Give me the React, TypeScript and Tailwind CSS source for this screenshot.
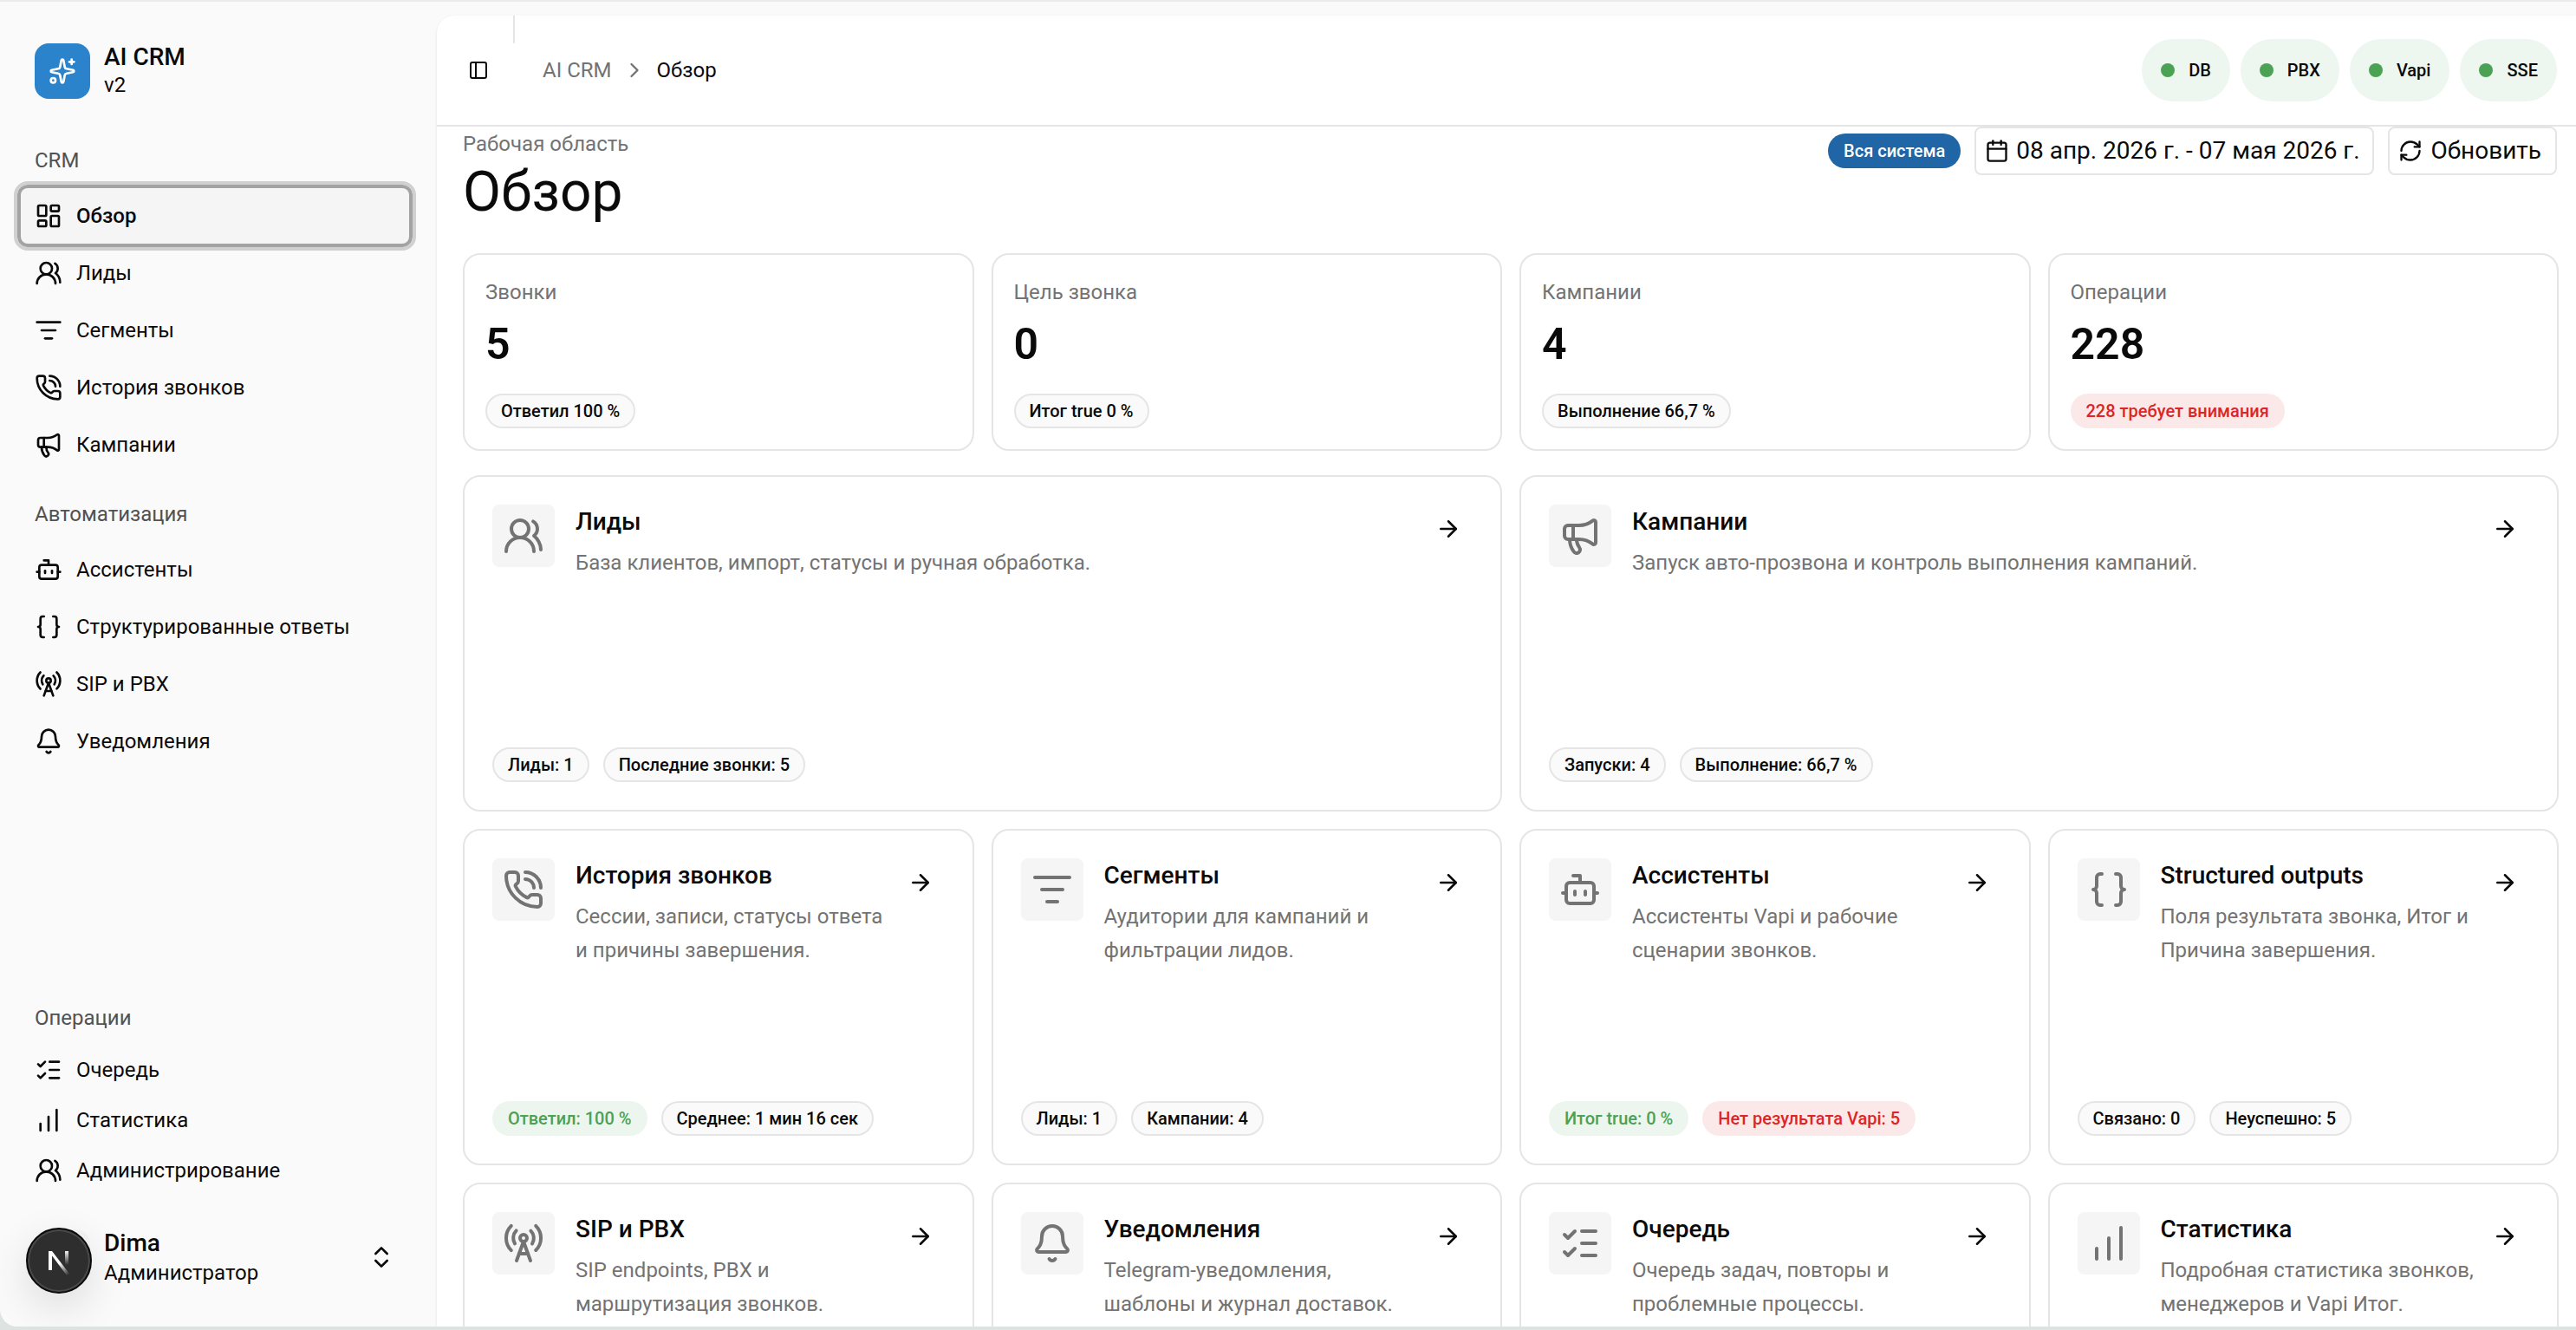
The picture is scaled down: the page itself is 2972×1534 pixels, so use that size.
import {
  ArrowRight,
  Bell,
  Bot,
  Braces,
  Calendar,
  ChartNoAxesColumnIncreasing,
  ChevronRight,
  ChevronsUpDown,
  LayoutDashboard,
  ListChecks,
  ListFilter,
  Megaphone,
  PanelLeft,
  PhoneCall,
  RadioTower,
  RefreshCw,
  Sparkles,
  UsersRound,
  type LucideIcon,
} from "lucide-react";
import clsx from "clsx";

// ---------------------------------------------------------------------------
// Types
// ---------------------------------------------------------------------------

type Tone = "outline" | "success" | "danger";

interface BadgeData {
  text: string;
  tone?: Tone;
}

interface NavItem {
  label: string;
  icon: LucideIcon;
  active?: boolean;
}

interface Section {
  title: string;
  description: string;
  icon: LucideIcon;
  wide?: boolean;
  badges: BadgeData[];
}

// ---------------------------------------------------------------------------
// Data
// ---------------------------------------------------------------------------

const crmNav: NavItem[] = [
  { label: "Обзор", icon: LayoutDashboard, active: true },
  { label: "Лиды", icon: UsersRound },
  { label: "Сегменты", icon: ListFilter },
  { label: "История звонков", icon: PhoneCall },
  { label: "Кампании", icon: Megaphone },
];

const automationNav: NavItem[] = [
  { label: "Ассистенты", icon: Bot },
  { label: "Структурированные ответы", icon: Braces },
  { label: "SIP и PBX", icon: RadioTower },
  { label: "Уведомления", icon: Bell },
];

const operationsNav: NavItem[] = [
  { label: "Очередь", icon: ListChecks },
  { label: "Статистика", icon: ChartNoAxesColumnIncreasing },
  { label: "Администрирование", icon: UsersRound },
];

const services = ["DB", "PBX", "Vapi", "SSE"];

const stats: { label: string; value: string; badge: BadgeData }[] = [
  { label: "Звонки", value: "5", badge: { text: "Ответил 100 %" } },
  { label: "Цель звонка", value: "0", badge: { text: "Итог true 0 %" } },
  { label: "Кампании", value: "4", badge: { text: "Выполнение 66,7 %" } },
  { label: "Операции", value: "228", badge: { text: "228 требует внимания", tone: "danger" } },
];

const sections: Section[] = [
  {
    title: "Лиды",
    description: "База клиентов, импорт, статусы и ручная обработка.",
    icon: UsersRound,
    wide: true,
    badges: [{ text: "Лиды: 1" }, { text: "Последние звонки: 5" }],
  },
  {
    title: "Кампании",
    description: "Запуск авто-прозвона и контроль выполнения кампаний.",
    icon: Megaphone,
    wide: true,
    badges: [{ text: "Запуски: 4" }, { text: "Выполнение: 66,7 %" }],
  },
  {
    title: "История звонков",
    description: "Сессии, записи, статусы ответа и причины завершения.",
    icon: PhoneCall,
    badges: [{ text: "Ответил: 100 %", tone: "success" }, { text: "Среднее: 1 мин 16 сек" }],
  },
  {
    title: "Сегменты",
    description: "Аудитории для кампаний и фильтрации лидов.",
    icon: ListFilter,
    badges: [{ text: "Лиды: 1" }, { text: "Кампании: 4" }],
  },
  {
    title: "Ассистенты",
    description: "Ассистенты Vapi и рабочие сценарии звонков.",
    icon: Bot,
    badges: [
      { text: "Итог true: 0 %", tone: "success" },
      { text: "Нет результата Vapi: 5", tone: "danger" },
    ],
  },
  {
    title: "Structured outputs",
    description: "Поля результата звонка, Итог и Причина завершения.",
    icon: Braces,
    badges: [{ text: "Связано: 0" }, { text: "Неуспешно: 5" }],
  },
  {
    title: "SIP и PBX",
    description: "SIP endpoints, PBX и маршрутизация звонков.",
    icon: RadioTower,
    badges: [],
  },
  {
    title: "Уведомления",
    description: "Telegram-уведомления, шаблоны и журнал доставок.",
    icon: Bell,
    badges: [],
  },
  {
    title: "Очередь",
    description: "Очередь задач, повторы и проблемные процессы.",
    icon: ListChecks,
    badges: [],
  },
  {
    title: "Статистика",
    description: "Подробная статистика звонков, менеджеров и Vapi Итог.",
    icon: ChartNoAxesColumnIncreasing,
    badges: [],
  },
];

// ---------------------------------------------------------------------------
// Small pieces
// ---------------------------------------------------------------------------

function Badge({ text, tone = "outline" }: BadgeData) {
  return (
    <span
      className={clsx(
        "inline-flex h-10 items-center rounded-full border-2 px-4 text-[20px] font-medium whitespace-nowrap",
        tone === "outline" && "border-neutral-200 bg-neutral-50 text-neutral-950",
        tone === "success" && "border-transparent bg-[#edf6ee] text-[#4ba154]",
        tone === "danger" && "border-transparent bg-[#fbe9e9] text-[#dc2626]",
      )}
    >
      {text}
    </span>
  );
}

function NavGroup({ title, items, compact }: { title: string; items: NavItem[]; compact?: boolean }) {
  return (
    <nav aria-label={title} className="pr-8 pl-6">
      <div className="flex h-16 items-center px-4 text-[24px] text-neutral-600">{title}</div>
      <ul className="flex flex-col gap-0.5">
        {items.map(({ label, icon: Icon, active }) => (
          <li key={label}>
            <a
              href="#"
              aria-current={active ? "page" : undefined}
              className={clsx(
                "flex items-center gap-4 rounded-lg px-4 text-[24px] text-neutral-950",
                compact ? "h-14" : "h-16",
                active && "bg-neutral-100 font-medium ring-4 ring-[#a3a3a3] outline-4 outline-offset-4 outline-[#d0d0d0]",
              )}
            >
              <Icon className="size-8 shrink-0" />
              <span className="truncate">{label}</span>
            </a>
          </li>
        ))}
      </ul>
    </nav>
  );
}

function SectionCard({ title, description, icon: Icon, wide, badges }: Section) {
  return (
    <article
      className={clsx(
        "flex flex-col justify-between rounded-[20px] border-2 border-neutral-200 bg-white p-8",
        wide && "col-span-2",
      )}
    >
      <div className="flex items-start">
        <div className="flex size-18 shrink-0 items-center justify-center rounded-lg bg-neutral-100">
          <Icon className="size-12 text-neutral-500" />
        </div>
        <div className="ml-6 min-w-0 flex-1">
          <h2 className="text-[28px] leading-10 font-medium text-neutral-950">{title}</h2>
          <p className="mt-2 text-[24px] leading-[39px] text-neutral-500">{description}</p>
        </div>
        <button
          type="button"
          aria-label={title}
          className="flex size-14 shrink-0 items-center justify-center text-neutral-950"
        >
          <ArrowRight className="size-[30px]" />
        </button>
      </div>
      <div className="flex gap-4">
        {badges.map((badge) => (
          <Badge key={badge.text} {...badge} />
        ))}
      </div>
    </article>
  );
}

// Round dev-tools button floating over the bottom left corner
function DevIndicator() {
  return (
    <button
      type="button"
      aria-label="Dev tools"
      className="absolute bottom-[38px] left-[30px] flex size-19 items-center justify-center rounded-full border-2 border-neutral-950 bg-[#2e2e2e] shadow-[0_16px_48px_rgba(0,0,0,0.12)] ring-2 ring-[#4a4a4a] ring-inset"
    >
      <svg className="size-10" viewBox="0 0 40 40" fill="none" aria-hidden="true">
        <defs>
          <linearGradient id="stem" x1="0" y1="8" x2="0" y2="25" gradientUnits="userSpaceOnUse">
            <stop stopColor="#fff" />
            <stop offset="1" stopColor="#fff" stopOpacity="0" />
          </linearGradient>
          <linearGradient id="diagonal" x1="22" y1="22" x2="32" y2="36" gradientUnits="userSpaceOnUse">
            <stop stopColor="#fff" />
            <stop offset="1" stopColor="#fff" stopOpacity="0" />
          </linearGradient>
        </defs>
        <rect x="8" y="9" width="4" height="22" fill="#fff" />
        <polygon points="8,9 12,9 32,35 29,37" fill="url(#diagonal)" />
        <rect x="27" y="9" width="4" height="17" fill="url(#stem)" />
      </svg>
    </button>
  );
}

// ---------------------------------------------------------------------------
// Layout
// ---------------------------------------------------------------------------

function Sidebar() {
  return (
    <aside className="flex w-[504px] shrink-0 flex-col">
      <div className="flex items-center gap-4 px-10 pt-12">
        <div className="flex size-16 items-center justify-center rounded-2xl bg-[#2b83cc] text-white">
          <Sparkles className="size-8" />
        </div>
        <div>
          <div className="text-[28px] leading-8 font-medium">AI CRM</div>
          <div className="text-[24px] leading-8">v2</div>
        </div>
      </div>

      <div className="mt-[39px] flex flex-1 flex-col gap-4">
        <NavGroup title="CRM" items={crmNav} />
        <NavGroup title="Автоматизация" items={automationNav} />
        <div className="mt-auto">
          <NavGroup title="Операции" items={operationsNav} compact />
        </div>
      </div>

      <button type="button" className="mt-6 mb-8 flex h-24 items-center gap-4 pr-12 pl-10 text-left">
        <span className="size-16 shrink-0 rounded-2xl bg-neutral-100" />
        <span className="flex-1">
          <span className="block text-[28px] leading-9 font-medium">Dima</span>
          <span className="block text-[24px] leading-8">Администратор</span>
        </span>
        <ChevronsUpDown className="size-8" />
      </button>
    </aside>
  );
}

function Header() {
  return (
    <header className="flex h-32 shrink-0 items-center border-b-2 border-neutral-200 pr-[22px]">
      <button type="button" aria-label="Toggle sidebar" className="flex h-14 w-22 items-center justify-center pl-2">
        <PanelLeft className="size-6" />
      </button>
      <div className="h-8 w-0.5 self-start bg-neutral-200" />
      <nav aria-label="Breadcrumb" className="ml-8 flex items-center gap-3 text-[24px]">
        <a href="#" className="text-neutral-500">
          AI CRM
        </a>
        <ChevronRight className="size-7 text-neutral-500" />
        <span aria-current="page">Обзор</span>
      </nav>
      <ul className="ml-auto flex gap-3">
        {services.map((name) => (
          <li
            key={name}
            className="flex h-18 items-center gap-4 rounded-full bg-[#edf6ef] px-[22px] text-[20px] font-medium"
          >
            <span className="size-4 rounded-full bg-[#4ba154]" />
            {name}
          </li>
        ))}
      </ul>
    </header>
  );
}

export default function App() {
  return (
    <div className="h-screen overflow-hidden bg-[#dce3e1] pb-1 font-[Roboto,sans-serif] text-neutral-950">
      <div className="relative flex h-full overflow-hidden rounded-bl-[20px] border-t-2 border-[#ebebeb] bg-neutral-50">
        <Sidebar />

        <main className="mt-4 flex min-w-0 flex-1 flex-col overflow-hidden rounded-tl-[20px] bg-white shadow-sm">
          <Header />

          <div className="min-h-0 flex-1 overflow-hidden pr-5 pl-[30px]">
            {/* Page title */}
            <div className="flex h-[146px] items-start justify-between pr-0.5">
              <div>
                <p className="text-[24px] leading-10 text-neutral-500">Рабочая область</p>
                <h1 className="text-[64px] leading-[72px]">Обзор</h1>
              </div>
              <div className="flex items-center gap-4">
                <span className="flex h-10 items-center rounded-full bg-[#2065a5] px-[18px] text-[20px] font-medium text-white">
                  Вся система
                </span>
                <button
                  type="button"
                  className="flex h-14 items-center gap-2 rounded-lg border-2 border-neutral-200 pr-3.5 pl-2.5 text-[28px]"
                >
                  <Calendar className="size-7" />
                  08 апр. 2026 г. - 07 мая 2026 г.
                </button>
                <button
                  type="button"
                  className="flex h-14 items-center gap-2.5 rounded-lg border-2 border-neutral-200 pr-4 pl-2.5 text-[28px]"
                >
                  <RefreshCw className="size-7" />
                  Обновить
                </button>
              </div>
            </div>

            {/* Key numbers */}
            <div className="grid grid-cols-4 gap-5">
              {stats.map(({ label, value, badge }) => (
                <div key={label} className="rounded-[20px] border-2 border-neutral-200 bg-white p-6">
                  <p className="text-[24px] leading-[38px] text-neutral-500">{label}</p>
                  <p className="mt-2 mb-6 text-[50px] leading-[66px] font-semibold">{value}</p>
                  <Badge {...badge} />
                </div>
              ))}
            </div>

            {/* Sections */}
            <div className="mt-7 grid auto-rows-[388px] grid-cols-4 gap-5">
              {sections.map((section) => (
                <SectionCard key={section.title} {...section} />
              ))}
            </div>
          </div>
        </main>

        <DevIndicator />
      </div>
    </div>
  );
}
